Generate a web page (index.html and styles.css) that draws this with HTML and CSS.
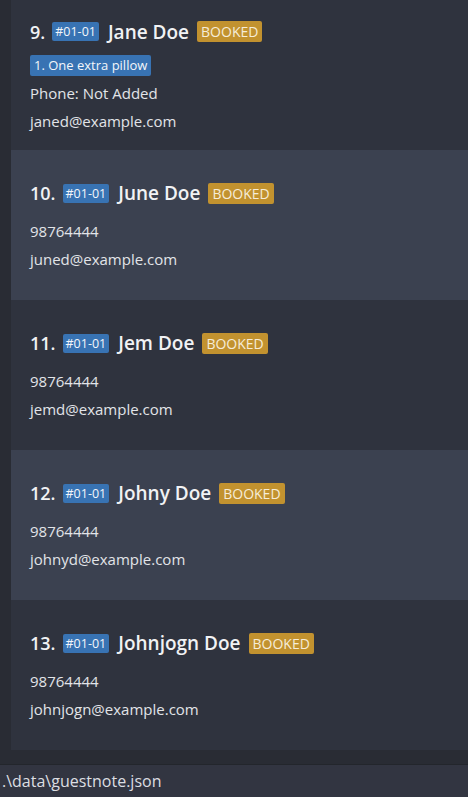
FILE: index.html
```html
<!DOCTYPE html>
<html>
<head>
<meta charset="utf-8">
<link rel="stylesheet" href="styles.css">
</head>
<body>
<div class="app">
  <div class="list">
    <div class="card odd">
      <div class="title"><span class="idx">9.</span><span class="room">#01-01</span><span class="name">Jane Doe</span><span class="status">BOOKED</span></div>
      <div class="tags"><span class="req">1. One extra pillow</span></div>
      <div class="line">Phone: Not Added</div>
      <div class="line">janed@example.com</div>
    </div>
    <div class="card even">
      <div class="title"><span class="idx">10.</span><span class="room">#01-01</span><span class="name">June Doe</span><span class="status">BOOKED</span></div>
      <div class="spacer"></div>
      <div class="line">98764444</div>
      <div class="line">juned@example.com</div>
    </div>
    <div class="card odd">
      <div class="title"><span class="idx">11.</span><span class="room">#01-01</span><span class="name">Jem Doe</span><span class="status">BOOKED</span></div>
      <div class="spacer"></div>
      <div class="line">98764444</div>
      <div class="line">jemd@example.com</div>
    </div>
    <div class="card even">
      <div class="title"><span class="idx">12.</span><span class="room">#01-01</span><span class="name">Johny Doe</span><span class="status">BOOKED</span></div>
      <div class="spacer"></div>
      <div class="line">98764444</div>
      <div class="line">johnyd@example.com</div>
    </div>
    <div class="card odd">
      <div class="title"><span class="idx">13.</span><span class="room">#01-01</span><span class="name">Johnjogn Doe</span><span class="status">BOOKED</span></div>
      <div class="spacer"></div>
      <div class="line">98764444</div>
      <div class="line">johnjogn@example.com</div>
    </div>
  </div>
  <div class="statusbar">.\data\guestnote.json</div>
</div>
</body>
</html>
```
FILE: styles.css
```css
html, body {
  margin: 0;
  padding: 0;
  background: #292c34;
  font-family: "Open Sans", "Noto Sans", sans-serif;
}
.app {
  width: 468px;
  height: 797px;
  display: flex;
  flex-direction: column;
  overflow: hidden;
}
.list {
  padding-left: 11px;
  padding-bottom: 14px;
  display: flex;
  flex-direction: column;
  border-bottom: 1px solid #23262c;
}
.card {
  height: 150px;
  box-sizing: border-box;
  padding-left: 19px;
  padding-top: 4px;
  display: flex;
  flex-direction: column;
  justify-content: center;
  color: #e2e4e8;
}
.odd { background: #2f333e; }
.even { background: #3b4150; }
.title {
  display: flex;
  align-items: center;
  height: 24px;
  color: #f1f2f4;
  font-weight: 600;
  font-size: 19px;
}
.idx { margin-right: 7px; font-size: 18px; }
.room {
  background: #3873b3;
  color: #f3f6fa;
  font-size: 12.5px;
  font-weight: 400;
  padding: 0 3px;
  height: 19px;
  line-height: 19px;
  border-radius: 2px;
  margin-right: 9px;
}
.name { margin-right: 8px; }
.status {
  background: #c2922f;
  color: #f6ecd8;
  font-size: 14px;
  font-weight: 400;
  padding: 0 4px;
  height: 21px;
  line-height: 21px;
  border-radius: 2px;
}
.tags { margin-top: 11px; display: flex; }
.req {
  background: #3873b3;
  color: #f3f6fa;
  font-size: 13px;
  padding: 0 4px;
  height: 21px;
  line-height: 21px;
  border-radius: 2px;
}
.spacer { height: 12px; }
.line {
  font-size: 15px;
  line-height: 28px;
}
.tags + .line { margin-top: 3px; }
.statusbar {
  flex: 1;
  background: #323541;
  color: #dcdee2;
  font-size: 16px;
  padding-left: 2px;
  line-height: 32px;
}
```
